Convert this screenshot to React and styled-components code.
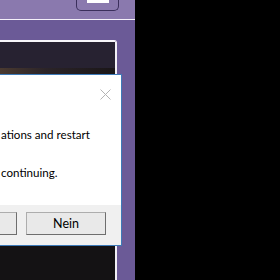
import React from "react";
import styled, { createGlobalStyle } from "styled-components";

const GlobalStyle = createGlobalStyle`
  html, body {
    margin: 0;
    padding: 0;
    background: #000;
    overflow: hidden;
  }
  body {
    font-family: Lato, "Noto Sans", "Liberation Sans", sans-serif;
  }
`;

const Screen = styled.div`
  position: relative;
  display: flex;
  width: 280px;
  height: 280px;
  overflow: hidden;
  background: #000;
`;

const Pane = styled.div`
  display: flex;
  flex-direction: column;
  width: 135px;
  height: 100%;
  background: #6b5a97;
`;

const TitleBar = styled.div`
  display: flex;
  justify-content: flex-end;
  align-items: flex-start;
  height: 19px;
  padding-right: 16px;
  background: #8a79ae;
  border-bottom: 1px solid #f4f0fa;
`;

const TitleButton = styled.div`
  display: flex;
  justify-content: center;
  width: 41px;
  height: 10px;
  border: 1px solid #3b2f5c;
  border-top: none;
  border-radius: 0 0 5px 5px;

  span {
    display: block;
    width: 22px;
    height: 3px;
    background: #fff;
  }
`;

const Content = styled.div`
  flex: 1;
  display: flex;
  padding: 20px 18px 0 0;
`;

const Card = styled.div`
  flex: 1;
  display: flex;
  flex-direction: column;
  border-top: 2px solid #f7f6fa;
  border-right: 2px solid #f2f0f6;
  border-top-right-radius: 3px;
  background: #141214;
`;

const CardTop = styled.div`
  height: 26px;
  background: #272231;
`;

const CardStrip = styled.div`
  height: 6px;
  background: linear-gradient(90deg, #4a3a30 0%, #2b2428 40%, #1a1618 100%);
`;

const Dialog = styled.div`
  position: absolute;
  top: 74px;
  left: -180px;
  width: 300px;
  height: 170px;
  display: flex;
  flex-direction: column;
  background: #fff;
  border: 1px solid #3d7ab8;
  color: #000;
`;

const Close = styled.div`
  position: absolute;
  top: 9px;
  right: 10px;
  width: 11px;
  height: 11px;
`;

const Message = styled.div`
  flex: 1;
  padding: 50px 0 0 180px;
  font-size: 11.6px;

  p {
    margin: 0;
    line-height: 19px;
    white-space: nowrap;
  }
  p + p {
    margin-top: 19px;
  }
`;

const Footer = styled.div`
  display: flex;
  justify-content: flex-end;
  gap: 9px;
  height: 40px;
  padding: 7px 15px 0 0;
  box-sizing: border-box;
  background: #f0f0f0;
`;

const Button = styled.div`
  display: flex;
  align-items: center;
  justify-content: center;
  width: ${(p) => p.w}px;
  height: 23px;
  box-sizing: border-box;
  border: 1px solid #adadad;
  border-right-color: #6e6e6e;
  border-bottom-color: #6e6e6e;
  background: #e9e9e9;
  font-size: 12.5px;
  color: #000;
`;

export default function App() {
  return (
    <>
      <GlobalStyle />
      <Screen>
        <Pane>
          <TitleBar>
            <TitleButton>
              <span />
            </TitleButton>
          </TitleBar>
          <Content>
            <Card>
              <CardTop />
              <CardStrip />
            </Card>
          </Content>
        </Pane>
        <Dialog>
          <Close>
            <svg width="11" height="11" viewBox="0 0 11 11">
              <path d="M0.5 0.5 L10.5 10.5 M10.5 0.5 L0.5 10.5" stroke="#b4b4b4" strokeWidth="1" />
            </svg>
          </Close>
          <Message>
            <p>ations and restart</p>
            <p>continuing.</p>
          </Message>
          <Footer>
            <Button w={80}>Ja</Button>
            <Button w={80}>Nein</Button>
          </Footer>
        </Dialog>
      </Screen>
    </>
  );
}
